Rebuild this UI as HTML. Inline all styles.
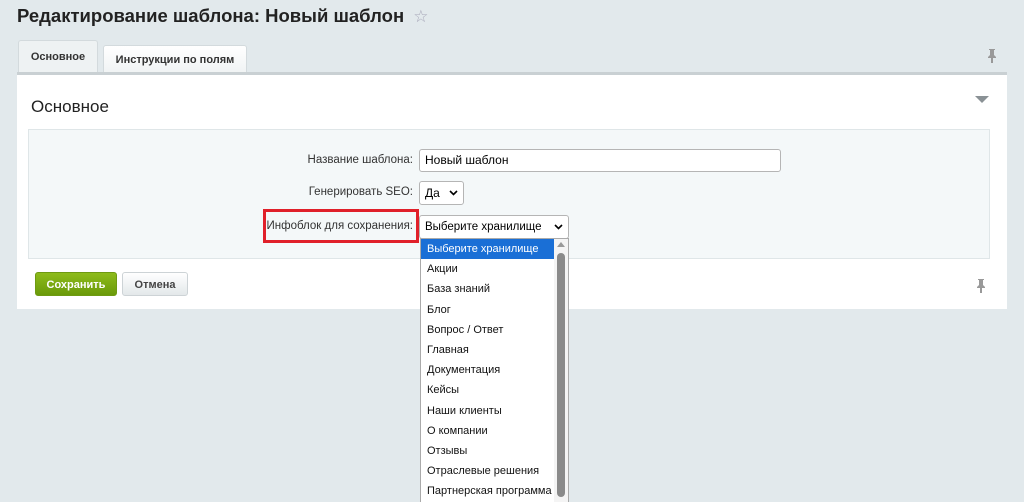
<!DOCTYPE html>
<html><head><meta charset="utf-8"><style>
*{box-sizing:border-box;margin:0;padding:0}
html,body{width:1024px;height:502px;overflow:hidden}
body{background:#e2e9ec;font-family:"Liberation Sans",Arial,sans-serif;position:relative;color:#000}
.abs{position:absolute}
h1{position:absolute;left:17px;top:5px;font-size:18.5px;font-weight:bold;color:#222;white-space:nowrap}
.tab{position:absolute;top:40px;height:33px;font-size:11px;font-weight:bold;color:#333;text-align:center;line-height:33px;border:1px solid #d3dadd;border-bottom:none;border-radius:3px 3px 0 0}
.panel{left:17px;top:72px;width:990px;height:237px;background:#fff;border-top:3px solid #c9d0d3}
.inner{left:28px;top:129px;width:962px;height:130px;background:#f4f8f9;border:1px solid #dfe6e8}
.lbl{position:absolute;font-size:11.5px;color:#333;text-align:right;width:200px;left:213px;white-space:nowrap}
.inp{position:absolute;border:1px solid #b5b5b5;border-radius:3px;background:#fff;font-size:12px;padding-left:5px;color:#000;white-space:nowrap;overflow:hidden}
.arr{position:absolute;right:5px;top:5px}
.list{left:420px;top:238px;width:149px;height:264px;background:#fff;border:1px solid #aaa;border-bottom:none;overflow:hidden}
.it{height:20.2px;line-height:20px;font-size:11px;padding-left:6px;width:134px;color:#111;white-space:nowrap}
.btn{position:absolute;top:272px;height:24px;font-size:11px;font-weight:bold;line-height:24px;text-align:center;border-radius:3px}
</style></head><body>
<h1>Редактирование шаблона: Новый шаблон <span style="color:#aab;font-size:17px;font-weight:normal;margin-left:4px">☆</span></h1>
<div class="tab" style="left:18px;width:80px;background:#eef2f3;height:34px">Основное</div>
<div class="tab" style="left:103px;width:144px;top:45px;height:28px;line-height:28px;background:linear-gradient(#fff,#f0f3f4)">Инструкции по полям</div>
<svg class="abs" style="left:987px;top:48px" width="10" height="16" viewBox="0 0 10 16"><path d="M2 1h6v1H7v5l2 2v1H6v5H4v-5H1V9l2-2V2H2z" fill="#999"/></svg>
<div class="abs panel"></div>
<div class="abs" style="left:31px;top:97px;font-size:17px;color:#222">Основное</div>
<svg class="abs" style="left:975px;top:96px" width="14" height="8"><path d="M0 0h14L7 7z" fill="#8a9195"/></svg>
<div class="abs inner"></div>
<div class="lbl" style="top:154px">Название шаблона:</div>
<div class="inp" style="left:419px;top:149px;width:362px;height:23px;line-height:21px">Новый шаблон</div>
<div class="lbl" style="top:186px">Генерировать SEO:</div>
<div class="inp" style="left:419px;top:181px;width:45px;height:24px;line-height:22px">Да<svg class="arr" style="top:8px" width="9" height="6"><path d="M1 1l3.5 3.5L8 1" stroke="#000" stroke-width="1.6" fill="none"/></svg></div>
<div class="abs" style="left:263px;top:209px;width:156px;height:34px;border:3px solid #e0202a"></div>
<div class="lbl" style="top:220px">Инфоблок для сохранения:</div>
<div class="inp" style="left:419px;top:215px;width:150px;height:24px;line-height:22px;font-size:11.5px">Выберите хранилище<svg class="arr" style="top:8px;background:#fff" width="9" height="6"><path d="M1 1l3.5 3.5L8 1" stroke="#000" stroke-width="1.6" fill="none"/></svg></div>
<div class="abs list">
<div class="it" style="background:#1a6fd6;color:#fff">Выберите хранилище</div>
<div class="it">Акции</div><div class="it">База знаний</div><div class="it">Блог</div><div class="it">Вопрос / Ответ</div><div class="it">Главная</div><div class="it">Документация</div><div class="it">Кейсы</div><div class="it">Наши клиенты</div><div class="it">О компании</div><div class="it">Отзывы</div><div class="it">Отраслевые решения</div><div class="it">Партнерская программа</div>
</div>
<div class="abs" style="left:554px;top:239px;width:14px;height:263px;background:#f4f4f4"></div>
<svg class="abs" style="left:557px;top:242px" width="8" height="5"><path d="M0 5L4 0l4 5z" fill="#999"/></svg>
<div class="abs" style="left:557px;top:253px;width:8px;height:244px;background:#8a8a8a;border-radius:4px"></div>
<div class="btn" style="left:35px;width:82px;background:linear-gradient(#8dbb1b,#6a9a0a);color:#fff;border:1px solid #6e9a12">Сохранить</div>
<div class="btn" style="left:122px;width:66px;background:linear-gradient(#fff,#e3e8ea);color:#444;border:1px solid #cdd3d6">Отмена</div>
<svg class="abs" style="left:976px;top:278px" width="10" height="16" viewBox="0 0 10 16"><path d="M2 1h6v1H7v5l2 2v1H6v5H4v-5H1V9l2-2V2H2z" fill="#999"/></svg>
</body></html>
